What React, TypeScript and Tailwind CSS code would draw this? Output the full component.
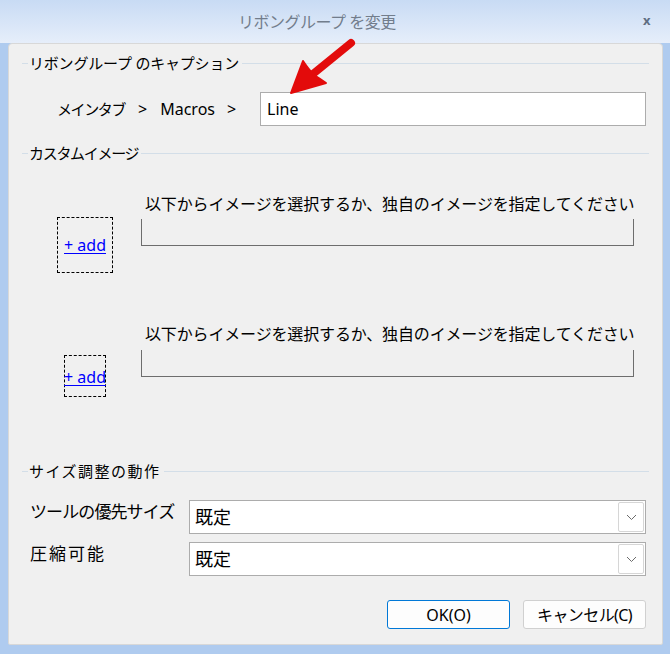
import React from 'react';

// Ribbon group edit dialog — Windows-style chrome, grouped sections

const FONT = "font-['Noto_Sans','Noto_Sans_CJK_JP',sans-serif]";

const GroupHeader = ({ label, track }: { label: string; track: string }) => (
    <div className="flex items-center h-[20px]">
        <div className="w-[6px] h-px bg-[#d3dee8]" />
        <span className={`ml-[1px] text-[15px] leading-[20px] text-black ${track}`}>{label}</span>
        <div className="flex-1 h-px bg-[#d3dee8] ml-[3px]" />
    </div>
);

const AddLink = () => (
    <span className="text-[16px] leading-[20px] text-[#0000ff] underline underline-offset-[2px] whitespace-nowrap">+ add</span>
);

const Chevron = () => (
    <svg width="11" height="7" viewBox="0 0 11 7" fill="none">
        <path d="M1 1l4.5 4.5L10 1" stroke="#6b6b6b" strokeWidth="1" />
    </svg>
);

const Select = ({ value }: { value: string }) => (
    <div className="w-[457px] h-[34px] border border-[#acacac] bg-white flex items-center">
        <span className="pl-[5px] text-[18px] leading-[24px] text-black">{value}</span>
        <div className="ml-auto mr-px w-[26px] h-[30px] border border-[#d6d6d6] rounded-[2px] bg-white flex items-center justify-center">
            <Chevron />
        </div>
    </div>
);

const DESC = '以下からイメージを選択するか、独自のイメージを指定してください';

export default function App() {
    return (
        <div className={`relative w-[670px] h-[654px] bg-[#afcbef] flex flex-col ${FONT}`}>
            {/* Title bar */}
            <div className="h-[43px] bg-gradient-to-b from-[#c8dbf4] to-[#e6eefa] flex items-center relative">
                <span className="ml-[238px] text-[16px] tracking-[-0.5px] leading-[22px] text-[#727d8c]">リボングループ を変更</span>
                <span className="absolute left-[643px] top-[11px] text-[13px] font-bold text-[#5f6e82]">x</span>
            </div>

            {/* Body */}
            <div className="flex-1 flex pl-[8px] pr-[7px] pb-[9px]">
                <div className="flex-1 bg-[#f0f0f0] border border-[#d8d8d8] rounded-t-[4px] rounded-b-[2px] pl-[13px] pr-[13px] pt-[9px] flex flex-col">
                    <GroupHeader label="リボングループ のキャプション" track="tracking-[-0.2px]" />

                    {/* Caption row */}
                    <div className="mt-[19px] h-[34px] flex items-center text-black">
                        <span className="ml-[35px] text-[15px] tracking-[-1.4px] leading-[22px]">メインタブ</span>
                        <span className="ml-[13px] text-[16px] leading-[22px]">&gt;</span>
                        <span className="ml-[13px] text-[16px] leading-[22px]">Macros</span>
                        <span className="ml-[12px] text-[16px] leading-[22px]">&gt;</span>
                        <div className="ml-auto mr-[3px] w-[386px] h-[34px] border border-[#acacac] bg-white flex items-center">
                            <span className="pl-[6px] text-[16px] leading-[22px]">Line</span>
                        </div>
                    </div>

                    <div className="mt-[17px]">
                        <GroupHeader label="カスタムイメージ" track="tracking-[-1.3px]" />
                    </div>

                    {/* Image 1 */}
                    <div className="mt-[30px] flex items-start">
                        <div className="w-[119px] shrink-0">
                            <div className="mt-[24px] ml-[35px] w-[56px] h-[56px] border border-dashed border-black flex items-center justify-center">
                                <AddLink />
                            </div>
                        </div>
                        <div className="w-[493px] flex flex-col">
                            <span className="pl-[4px] text-[16px] leading-[22px] tracking-[-0.15px] text-black whitespace-nowrap">{DESC}</span>
                            <div className="mt-[4px] h-[27px] border-l border-r border-b border-[#6d6d6d]" />
                        </div>
                    </div>

                    {/* Image 2 */}
                    <div className="mt-[50px] flex items-start">
                        <div className="w-[119px] shrink-0">
                            <div className="mt-[32px] ml-[42px] w-[42px] h-[42px] border border-dashed border-black flex items-center justify-center">
                                <div className="mt-px">
                                    <AddLink />
                                </div>
                            </div>
                        </div>
                        <div className="w-[493px] flex flex-col">
                            <span className="pl-[4px] text-[16px] leading-[22px] tracking-[-0.15px] text-black whitespace-nowrap">{DESC}</span>
                            <div className="mt-[5px] h-[27px] border-l border-r border-b border-[#6d6d6d]" />
                        </div>
                    </div>

                    <div className="mt-[64px]">
                        <GroupHeader label="サイズ調整の動作" track="tracking-[1.5px]" />
                    </div>

                    {/* Resize settings */}
                    <div className="mt-[19px] flex items-start">
                        <span className="ml-[8px] w-[159px] text-[17px] leading-[24px] tracking-[-0.9px] text-black">ツールの優先サイズ</span>
                        <Select value="既定" />
                    </div>
                    <div className="mt-[8px] flex items-start">
                        <span className="ml-[8px] w-[159px] text-[17px] leading-[24px] tracking-[2px] text-black">圧縮可能</span>
                        <Select value="既定" />
                    </div>

                    {/* Buttons */}
                    <div className="mt-[24px] mr-[3px] flex justify-end gap-[13px]">
                        <button className="w-[123px] h-[29px] border border-[#0078d7] rounded-[3px] bg-[#fdfdfd] text-[16px] leading-[20px] text-black">OK(O)</button>
                        <button className="w-[123px] h-[29px] border border-[#d0d0d0] rounded-[3px] bg-[#fdfdfd] text-[16px] leading-[20px] tracking-[-0.6px] text-black">キャンセル(C)</button>
                    </div>
                </div>
            </div>

            {/* Annotation arrow */}
            <svg className="absolute left-0 top-0 pointer-events-none" width="670" height="654">
                <line x1="351" y1="43" x2="308" y2="78" stroke="#e30b0b" strokeWidth="8" strokeLinecap="round" />
                <path d="M291 93 L303 61 Q309 70 314 75 Q319 78 326 83 Z" fill="#e30b0b" stroke="#e30b0b" strokeWidth="2" strokeLinejoin="round" />
            </svg>
        </div>
    );
}
